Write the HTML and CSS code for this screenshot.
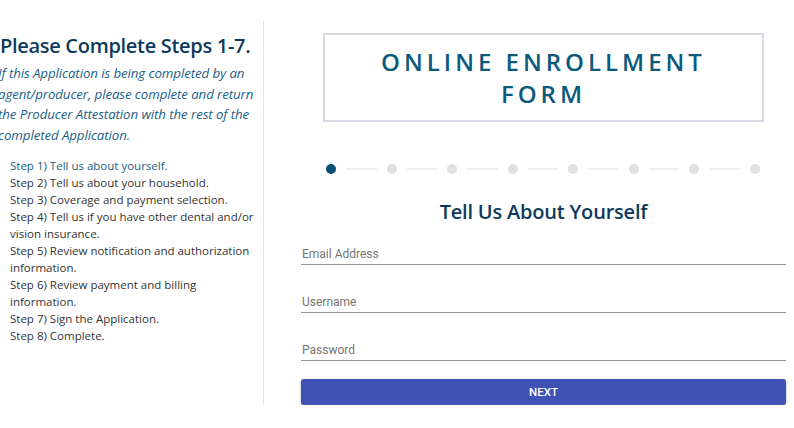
FILE: index.html
```html
<!DOCTYPE html>
<html lang="en">

<head>
    <meta name="viewport" content="width=device-width, initial-scale=1.0" />
    <title>Online Enrollment Form</title>
    <link rel="stylesheet" href="styles.css">
</head>

<body>
    <div class="page">
        <aside class="steps">
            <h2>Please Complete Steps 1-7.</h2>
            <p class="note">If this Application is being completed by an agent/producer, please complete and return the Producer Attestation with the rest of the completed Application.</p>
            <ul class="step-list">
                <li class="current">Step 1) Tell us about yourself.</li>
                <li>Step 2) Tell us about your household.</li>
                <li>Step 3) Coverage and payment selection.</li>
                <li>Step 4) Tell us if you have other dental and/or vision insurance.</li>
                <li>Step 5) Review notification and authorization information.</li>
                <li>Step 6) Review payment and billing information.</li>
                <li>Step 7) Sign the Application.</li>
                <li>Step 8) Complete.</li>
            </ul>
        </aside>

        <main class="enroll">
            <div class="title-box">ONLINE ENROLLMENT FORM</div>

            <div class="stepper">
                <span class="dot active"></span><span class="bar"></span>
                <span class="dot"></span><span class="bar"></span>
                <span class="dot"></span><span class="bar"></span>
                <span class="dot"></span><span class="bar"></span>
                <span class="dot"></span><span class="bar"></span>
                <span class="dot"></span><span class="bar"></span>
                <span class="dot"></span><span class="bar"></span>
                <span class="dot"></span>
            </div>

            <h3>Tell Us About Yourself</h3>

            <form id="aboutForm">
                <input type="email" name="email" placeholder="Email Address" />
                <input type="text" name="username" placeholder="Username" />
                <input type="password" name="password" placeholder="Password" />
                <button type="submit">NEXT</button>
            </form>
        </main>
    </div>
</body>

</html>
```

FILE: styles.css
```css
body {
    margin: 0;
    font-family: "Open Sans", "Noto Sans", sans-serif;
    background-color: #fff;
}

.page {
    display: flex;
    padding-top: 21px;
}

.steps {
    width: 264px;
    height: 384px;
    border-right: 1px solid #e4e4e4;
    box-sizing: border-box;
}

.steps h2 {
    margin: 11px 0 0 0;
    font-size: 20px;
    font-weight: 600;
    letter-spacing: -0.3px;
    color: #0d3a5c;
    white-space: nowrap;
}

.note {
    margin: 4px 8px 0 -2px;
    font-size: 13.3px;
    font-style: italic;
    line-height: 20.5px;
    letter-spacing: -0.1px;
    color: #1b5f86;
}

.step-list {
    list-style: none;
    margin: 12px 0 0 10px;
    padding: 0;
    font-size: 11.5px;
    line-height: 17px;
    color: #333;
}

.step-list .current {
    color: #17617f;
}

.enroll {
    width: 485px;
    margin-left: 37px;
}

.title-box {
    margin: 12px 22px 0;
    height: 89px;
    border: 2px solid #d9d9e6;
    box-sizing: border-box;
    display: flex;
    align-items: center;
    justify-content: center;
    text-align: center;
    padding: 0 40px;
    font-size: 24px;
    font-weight: 600;
    letter-spacing: 4px;
    line-height: 32px;
    color: #0b5a7e;
}

.stepper {
    display: flex;
    align-items: center;
    margin: 42px 26px 0 25px;
}

.dot {
    width: 10px;
    height: 10px;
    border-radius: 50%;
    background-color: #e0e0e0;
}

.dot.active {
    background-color: #0c4f72;
}

.bar {
    flex: 1;
    height: 2px;
    margin: 0 10px;
    background-color: #eeeeee;
}

h3 {
    margin: 24px 0 0;
    text-align: center;
    font-size: 20px;
    font-weight: 600;
    letter-spacing: -0.2px;
    color: #0d3a5c;
}

form {
    margin-top: 17px;
}

input {
    display: block;
    width: 100%;
    box-sizing: border-box;
    border: none;
    border-bottom: 1px solid #949494;
    padding: 5px 0 3px 1px;
    margin-bottom: 25px;
    font-family: Roboto, sans-serif;
    font-size: 12px;
    outline: none;
}

input::placeholder {
    color: #757575;
}

button {
    display: block;
    width: 100%;
    height: 26px;
    margin-top: -7px;
    border: none;
    border-radius: 3px;
    background-color: #3f51b5;
    color: #fff;
    font-family: Roboto, sans-serif;
    font-size: 11.5px;
    font-weight: 500;
    box-shadow: 0 1px 3px rgba(0, 0, 0, 0.3);
}
```
